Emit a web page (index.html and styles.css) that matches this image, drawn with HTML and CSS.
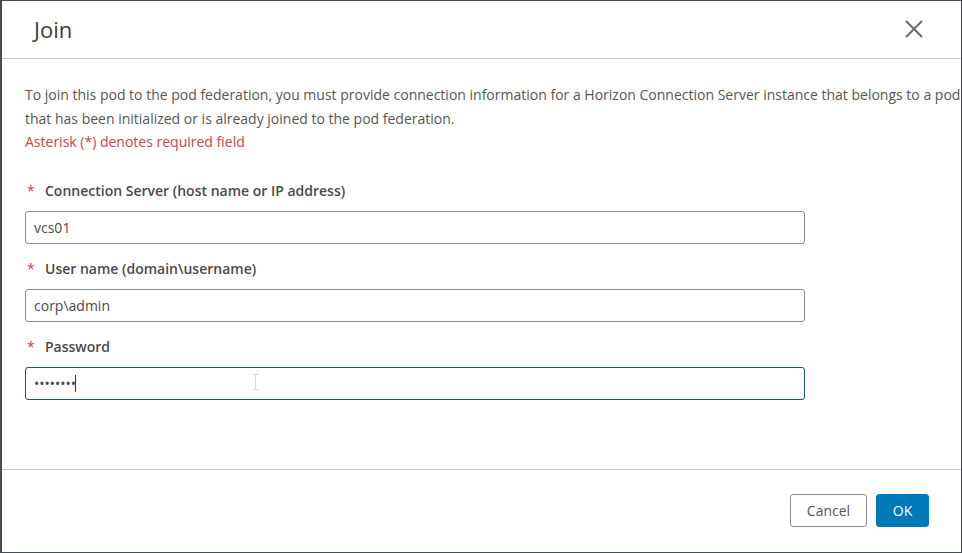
FILE: index.html
```html
<!DOCTYPE html>
<html lang="en">
<head>
<meta charset="utf-8">
<title>Join</title>
<link rel="stylesheet" href="styles.css">
</head>
<body>
<div class="dialog">
  <header class="dialog-header">
    <h1 class="dialog-title">Join</h1>
    <button class="close-btn" aria-label="Close">
      <svg width="18" height="18" viewBox="0 0 18 18"><path d="M1 1 L17 17 M17 1 L1 17" stroke="#6a6a6a" stroke-width="2" fill="none"/></svg>
    </button>
  </header>
  <div class="dialog-body">
    <p class="intro">
      <span class="line">To join this pod to the pod federation, you must provide connection information for a Horizon Connection Server instance that belongs to a pod</span>
      <span class="line">that has been initialized or is already joined to the pod federation.</span>
      <span class="line required-note">Asterisk (*) denotes required field</span>
    </p>
    <form class="form">
      <div class="field">
        <label class="field-label"><span class="req">*</span>Connection Server (host name or IP address)</label>
        <input class="text-input" type="text" value="vcs01">
      </div>
      <div class="field">
        <label class="field-label"><span class="req">*</span>User name (domain\username)</label>
        <input class="text-input" type="text" value="corp\admin">
      </div>
      <div class="field">
        <label class="field-label"><span class="req">*</span>Password</label>
        <div class="input-wrap">
          <input class="text-input focused" type="password" value="12345678">
          <span class="caret"></span>
          <svg class="ibeam" width="7" height="16" viewBox="0 0 7 16"><path d="M0.5 0.5 H6.5 M3.5 0.5 V15.5 M0.5 15.5 H6.5" stroke="#d8d8d8" stroke-width="1" fill="none"/></svg>
        </div>
      </div>
    </form>
  </div>
  <footer class="dialog-footer">
    <button class="btn btn-outline">Cancel</button>
    <button class="btn btn-primary">OK</button>
  </footer>
</div>
</body>
</html>
```

FILE: styles.css
```css
* { box-sizing: border-box; }
html, body {
  margin: 0;
  padding: 0;
  background: #ffffff;
}
body {
  font-family: "Open Sans", "Noto Sans", "DejaVu Sans", sans-serif;
  color: #565656;
}
.dialog {
  width: 962px;
  height: 553px;
  border-top: 1px solid #444b52;
  border-left: 2px solid #444b52;
  border-right: 1px solid #444b52;
  border-bottom: 1px solid #444b52;
  display: flex;
  flex-direction: column;
  overflow: hidden;
  background: #fff;
}
.dialog-header {
  height: 58px;
  flex: none;
  border-bottom: 1px solid #cccccc;
  display: flex;
  align-items: center;
  justify-content: space-between;
  padding: 0 38px 0 32px;
}
.dialog-title {
  margin: 0;
  font-size: 22px;
  font-weight: 400;
  color: #3c3c3c;
  line-height: 28px;
  padding-bottom: 2px;
}
.close-btn {
  border: none;
  background: none;
  padding: 0;
  width: 18px;
  height: 18px;
  display: flex;
  margin-bottom: 2px;
}
.dialog-body {
  flex: 1;
  padding: 24px 0 0 23px;
  overflow: hidden;
}
.intro {
  margin: 0;
  font-size: 14px;
  line-height: 23.5px;
  color: #565656;
}
.line {
  display: block;
  white-space: nowrap;
}
.required-note {
  color: #c6454f;
}
.form {
  margin-top: 27px;
  width: 780px;
}
.field {
  display: flex;
  flex-direction: column;
  margin-bottom: 15px;
}
.field-label {
  font-size: 14px;
  line-height: 20px;
  font-weight: 600;
  color: #4a4a4a;
  margin-bottom: 10px;
  display: flex;
}
.req {
  color: #c6454f;
  font-weight: 400;
  width: 20px;
  padding-left: 2px;
}
.text-input {
  width: 780px;
  height: 33px;
  border: 1px solid #8c8c8c;
  border-radius: 3px;
  padding: 0 8px;
  font-family: "Open Sans", "Noto Sans", sans-serif;
  font-size: 14px;
  color: #4a4a4a;
  background: #fff;
  outline: none;
}
.text-input.focused {
  border-color: #1c5471;
}
.input-wrap {
  position: relative;
}
.caret {
  position: absolute;
  left: 50px;
  top: 8px;
  width: 1px;
  height: 17px;
  background: #333;
}
.ibeam {
  position: absolute;
  left: 227px;
  top: 7px;
}
.dialog-footer {
  height: 83px;
  flex: none;
  border-top: 1px solid #cccccc;
  display: flex;
  justify-content: flex-end;
  align-items: flex-start;
  gap: 9px;
  padding: 24px 32px 0 0;
}
.btn {
  height: 33px;
  border-radius: 3px;
  font-family: "Open Sans", "Noto Sans", sans-serif;
  font-size: 14px;
  padding: 0;
  cursor: pointer;
}
.btn-outline {
  width: 77px;
  border: 1px solid #8c8c8c;
  background: #fff;
  color: #565656;
}
.btn-primary {
  width: 53px;
  border: 1px solid #0079b8;
  background: #0079b8;
  color: #fff;
}
```
